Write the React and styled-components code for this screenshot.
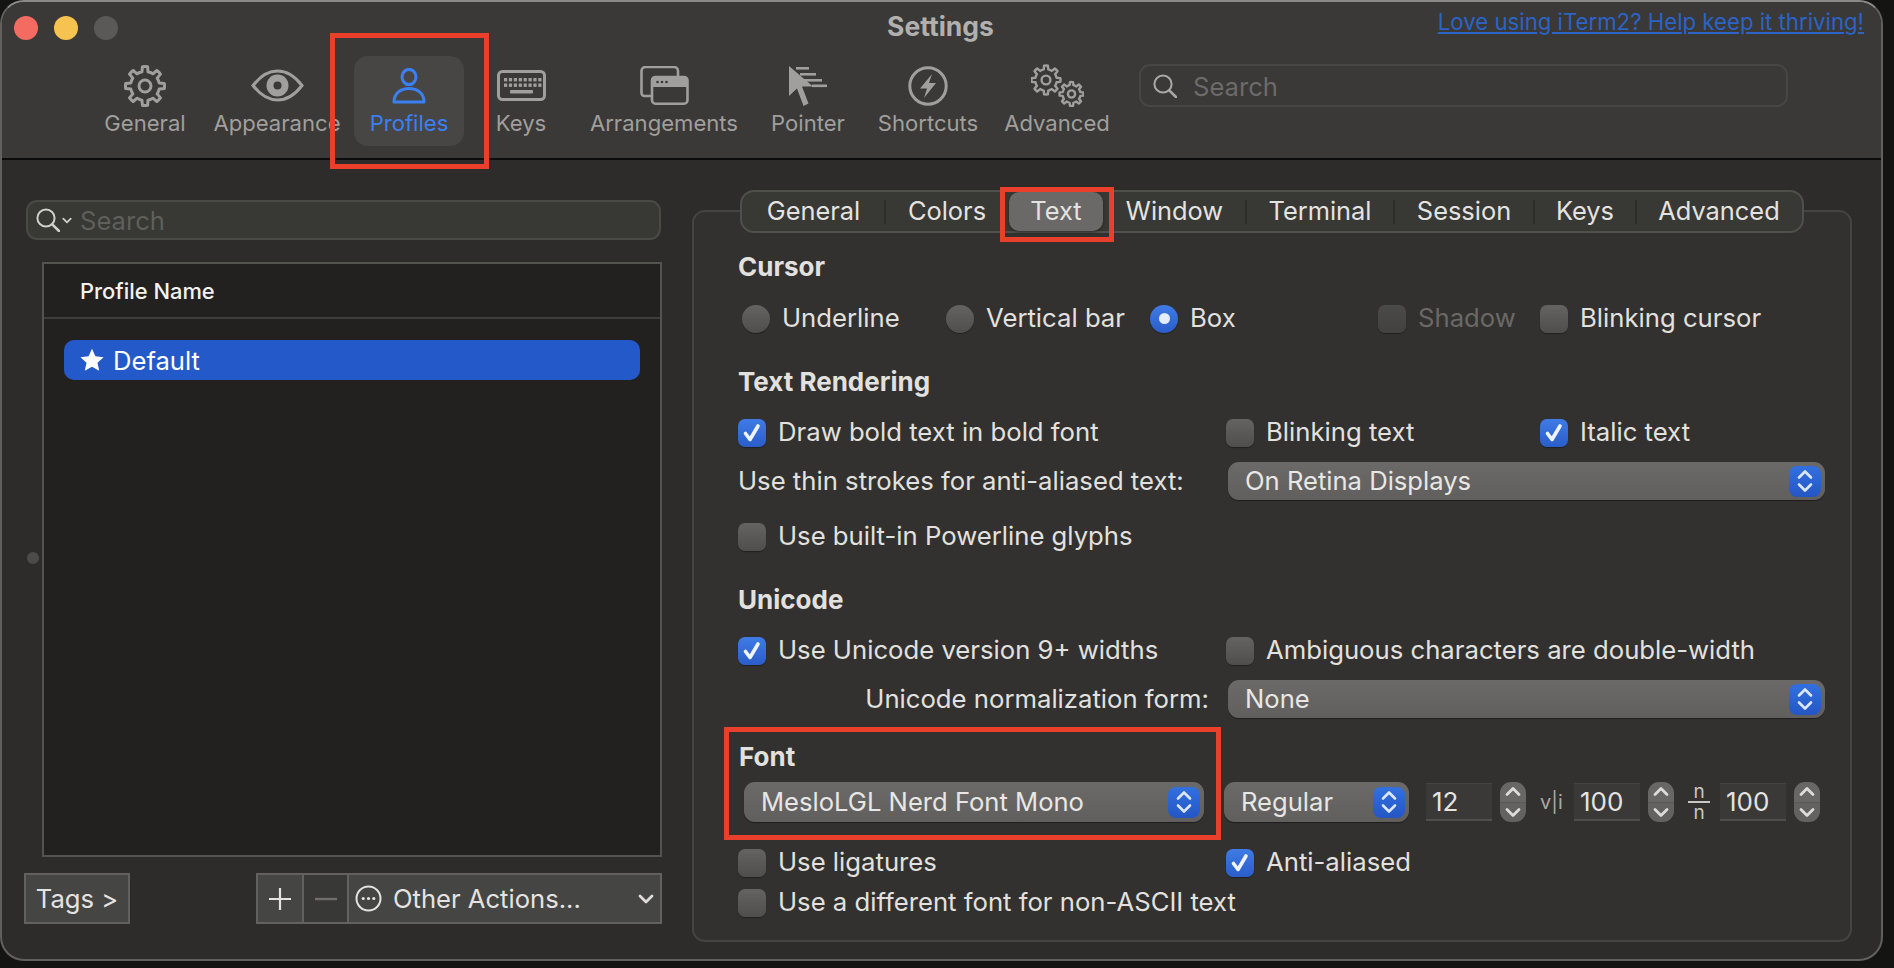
import React from 'react'
import styled, { createGlobalStyle } from 'styled-components'

const GlobalStyle = createGlobalStyle`
    * { box-sizing: border-box; }
    html, body { margin: 0; padding: 0; background: #141413; }
    body { font-family: Inter, "Liberation Sans", sans-serif; color: #e2e1df; overflow: hidden; }
`

const Page = styled.div`
    position: relative;
    width: 1894px;
    height: 968px;
`

const Window = styled.div`
    width: 1883px;
    height: 961px;
    border: 2px solid #61605e;
    border-top-color: #8b8a88;
    border-radius: 24px;
    overflow: hidden;
    background: #2d2c2a;
    display: flex;
    flex-direction: column;
`

const Toolbar = styled.div`
    height: 158px;
    background: #3a3937;
    border-bottom: 2px solid #0c0c0c;
    flex-shrink: 0;
`

const TitleRow = styled.div`
    height: 54px;
    display: grid;
    grid-template-columns: 1fr auto 1fr;
`

const Lights = styled.div`
    display: flex;
    gap: 16px;
    padding: 14px 0 0 12px;
`

const Light = styled.div`
    width: 24px;
    height: 24px;
    border-radius: 50%;
    background: ${props => props.$color};
`

const Title = styled.div`
    padding: 11px 2px 0 0;
    font-size: 26.5px;
    font-weight: 700;
    line-height: 26px;
    color: #b1b0ae;
`

const Promo = styled.a`
    justify-self: end;
    padding: 7px 17px 0 0;
    font-size: 22.2px;
    line-height: 26px;
    color: #2c63c6;
    text-decoration: underline;
    white-space: nowrap;
`

const ToolRow = styled.div`
    display: flex;
    padding-left: 88px;
    height: 90px;
`

const ToolItem = styled.div`
    width: ${props => props.$width}px;
    height: 90px;
    border-radius: 14px;
    display: flex;
    flex-direction: column;
    align-items: center;
    background: ${props => (props.$active ? '#474645' : 'transparent')};
    color: ${props => (props.$active ? '#3b80f2' : '#a09f9d')};
`

const ToolIcon = styled.div`
    height: 55px;
    padding-top: 4px;
    display: flex;
    align-items: center;
    justify-content: center;
`

const ToolLabel = styled.div`
    font-size: 22.1px;
    line-height: 24px;
    white-space: nowrap;
`

const ToolSearch = styled.div`
    width: 649px;
    height: 43px;
    margin: 8px 0 0 15px;
    border: 2px solid #474644;
    border-radius: 11px;
    display: flex;
    align-items: center;
    gap: 16px;
    padding: 1px 0 0 12px;
    font-size: 25.6px;
    color: #6c6b69;
`

const GlassSlot = styled.span`
    display: flex;
    color: ${props => props.$color};
`

const FilterChevron = styled.span`
    display: flex;
    margin: 0 8px 0 2px;
`

const Body = styled.div`
    flex: 1;
    display: flex;
`

const LeftPane = styled.div`
    position: relative;
    width: 690px;
    padding: 40px 0 0 22px;
`

const ProfileSearch = styled.div`
    width: 635px;
    height: 40px;
    margin-left: 2px;
    border: 2px solid #494945;
    border-radius: 11px;
    background: #383834;
    display: flex;
    align-items: center;
    padding-left: 8px;
    font-size: 25.6px;
    color: #5f5f5c;
`

const ProfileTable = styled.div`
    width: 620px;
    height: 595px;
    margin: 22px 0 0 18px;
    border: 2px solid #53534f;
    background: #22211f;
`

const TableHead = styled.div`
    height: 55px;
    padding-left: 36px;
    border-bottom: 2px solid #3e3d3b;
    display: flex;
    align-items: center;
    font-size: 21.9px;
    font-weight: 500;
    color: #f2f2f0;
`

const TableRow = styled.div`
    width: 576px;
    height: 40px;
    margin: 21px 0 0 20px;
    border-radius: 10px;
    background: #2459c9;
    display: flex;
    align-items: center;
    gap: 9px;
    padding-left: 16px;
    font-size: 25.6px;
    color: #fff;
`

const SplitHandle = styled.div`
    position: absolute;
    left: 25px;
    top: 392px;
    width: 12px;
    height: 12px;
    border-radius: 50%;
    background: #4c4b49;
`

const ListFooter = styled.div`
    display: flex;
    margin-top: 16px;
    height: 51px;
`

const FooterButton = styled.div`
    width: ${props => props.$width}px;
    height: 51px;
    margin-left: ${props => props.$gap || 0}px;
    border: 2px solid #62615f;
    border-left-width: ${props => (props.$joined ? 0 : 2)}px;
    background: ${props => (props.$dim ? '#383836' : '#454543')};
    display: flex;
    align-items: center;
    justify-content: ${props => (props.$spread ? 'flex-start' : 'center')};
    gap: 11px;
    padding-left: ${props => (props.$spread ? 6 : 0)}px;
    font-size: 25.6px;
    color: #e4e3e1;
`

const FooterChevron = styled.div`
    margin-left: auto;
    margin-right: 6px;
    display: flex;
`

const RightPane = styled.div`
    padding-top: 50px;
`

const Panel = styled.div`
    width: 1160px;
    height: 732px;
    border: 2px solid #454442;
    border-radius: 13px;
    background: #32312f;
`

const TabBar = styled.div`
    width: 1064px;
    height: 43px;
    margin: -22px 0 0 46px;
    border: 2px solid #4f4f4b;
    border-radius: 14px;
    background: #383834;
    display: flex;
    align-items: center;
`

const Tab = styled.div`
    position: relative;
    width: ${props => props.$width}px;
    height: 39px;
    padding-bottom: 2px;
    border-radius: 10px;
    display: flex;
    align-items: center;
    justify-content: center;
    font-size: 25.4px;
    color: #e4e3e1;
    background: ${props => (props.$selected ? '#6a6967' : 'transparent')};
    box-shadow: ${props => (props.$selected ? '0 1px 3px rgba(0,0,0,.45)' : 'none')};

    ${props => props.$sep && `
        &::after {
            content: '';
            position: absolute;
            right: -1px;
            top: 8px;
            height: 24px;
            width: 2px;
            background: #2d2c2a;
        }
    `}
`

const Content = styled.div`
    padding-left: 44px;
`

const Heading = styled.div`
    height: 30px;
    margin-top: ${props => props.$top}px;
    margin-left: ${props => props.$left || 0}px;
    font-size: 26px;
    font-weight: 700;
    line-height: 30px;
    color: #e2e1df;
`

const Row = styled.div`
    display: grid;
    grid-template-columns: ${props => props.$columns || '488px 314px 1fr'};
    align-items: center;
    height: ${props => props.$height || 28}px;
    margin-top: ${props => props.$top}px;
    margin-left: ${props => props.$left || 0}px;
`

const Option = styled.div`
    display: flex;
    align-items: center;
    gap: 12px;
    font-size: 25.7px;
    white-space: nowrap;
    color: ${props => (props.$disabled ? '#6a6967' : '#e2e1df')};
`

const RaisedText = styled.span`
    padding-bottom: 2px;
`

const Check = styled.div`
    width: 28px;
    height: 28px;
    border-radius: 7px;
    display: flex;
    align-items: center;
    justify-content: center;
    flex-shrink: 0;
    background: ${props => (props.$on
        ? 'linear-gradient(#3f7be6, #2a5dc9)'
        : props.$disabled
            ? 'linear-gradient(#4a4a48, #424140)'
            : 'linear-gradient(#646361, #4f4e4c)')};
    box-shadow: 0 1px 1px rgba(0,0,0,.35);
`

const Radio = styled(Check)`
    border-radius: 50%;
`

const RadioDot = styled.div`
    width: 11px;
    height: 11px;
    border-radius: 50%;
    background: #e4edfc;
`

const FieldLabel = styled.div`
    font-size: 25.7px;
    white-space: nowrap;
    text-align: ${props => (props.$right ? 'right' : 'left')};
    padding-right: ${props => (props.$right ? 17 : 0)}px;
    padding-bottom: 2px;
`

const Popup = styled.div`
    width: ${props => props.$width}px;
    height: ${props => props.$height || 38}px;
    margin-left: ${props => props.$left || 0}px;
    border-radius: 11px;
    background: linear-gradient(#6b6a68, #615f5d);
    box-shadow: 0 1px 1px rgba(0,0,0,.4);
    display: flex;
    align-items: center;
    justify-content: space-between;
    padding: 0 4px 0 17px;
    font-size: 25.6px;
    color: #e8e7e5;
    flex-shrink: 0;
`

const PopupArrows = styled.div`
    width: 32px;
    height: ${props => props.$height || 31}px;
    border-radius: 8px;
    background: linear-gradient(#3270e0, #2456c4);
    display: flex;
    align-items: center;
    justify-content: center;
`

const FontRow = styled.div`
    display: flex;
    align-items: center;
    height: 40px;
    margin: 10px 0 0 6px;
`

const NumberField = styled.div`
    width: 66px;
    height: 38px;
    margin-left: ${props => props.$left}px;
    background: #3a3937;
    border-top: 1px solid #454442;
    border-bottom: 2px solid #504f4d;
    display: flex;
    align-items: center;
    padding-left: 6px;
    font-size: 26px;
    color: #e4e3e1;
`

const Stepper = styled.div`
    width: 26px;
    height: 40px;
    margin-left: 8px;
    border-radius: 11px;
    background: linear-gradient(#686765 49%, #555452 50%, #636260 54%);
    display: flex;
    align-items: center;
    justify-content: center;
`

const SpacingLabel = styled.div`
    width: 23px;
    margin-left: 14px;
    font-size: 20px;
    color: #a9a8a6;
    white-space: nowrap;
`

const RatioLabel = styled.div`
    width: 22px;
    margin-left: 14px;
    display: flex;
    flex-direction: column;
    align-items: center;
    font-size: 19px;
    line-height: 17px;
    color: #c8c7c5;
`

const RatioLine = styled.div`
    width: 100%;
    height: 2px;
    margin: 1px 0;
    background: #c8c7c5;
`

const Callout = styled.div`
    position: absolute;
    left: ${props => props.$x}px;
    top: ${props => props.$y}px;
    width: ${props => props.$w}px;
    height: ${props => props.$h}px;
    border: 5px solid #e8402a;
    pointer-events: none;
`

// gear outline, used by the General and Advanced toolbar icons
const gearPath = (cx, cy, outer, inner, teeth = 8) => {
    const step = (Math.PI * 2) / teeth
    const w = step * 0.27
    const pt = (r, a) => `${(cx + r * Math.cos(a)).toFixed(2)} ${(cy + r * Math.sin(a)).toFixed(2)}`
    let d = ''
    for (let i = 0; i < teeth; i++) {
        const a = i * step - Math.PI / 2
        d += `${i === 0 ? 'M' : 'L'}${pt(inner, a - w)} L${pt(outer, a - w * 0.62)} A${outer} ${outer} 0 0 1 ${pt(outer, a + w * 0.62)} L${pt(inner, a + w)} `
        d += `A${inner} ${inner} 0 0 1 ${pt(inner, a + step - w)} `
    }
    return d + 'Z'
}

const GearIcon = () => (
    <svg width="42" height="42" viewBox="0 0 42 42" fill="none" stroke="currentColor" strokeWidth="3" strokeLinejoin="round">
        <path d={gearPath(21, 21, 19.5, 14.5)} />
        <circle cx="21" cy="21" r="6" />
    </svg>
)

const EyeIcon = () => (
    <svg width="53" height="33" viewBox="0 0 53 33" fill="none" stroke="currentColor" strokeWidth="3">
        <path d="M2 16.5C10 6 18 2 26.5 2S43 6 51 16.5C43 27 35 31 26.5 31S10 27 2 16.5Z" />
        <circle cx="26.5" cy="16.5" r="11" fill="currentColor" stroke="none" />
        <circle cx="26.5" cy="16.5" r="4" fill="#3a3937" stroke="none" />
    </svg>
)

const PersonIcon = () => (
    <svg width="34" height="36" viewBox="0 0 34 36" fill="none" stroke="currentColor" strokeWidth="3">
        <ellipse cx="17" cy="9" rx="7" ry="7.6" />
        <path d="M2 34C2 25 9 20.5 17 20.5S32 25 32 34Z" strokeLinejoin="round" />
    </svg>
)

const KeyboardIcon = () => {
    const keys = []
    for (let row = 0; row < 2; row++) {
        for (let col = 0; col < 8; col++) {
            keys.push(<rect key={`${row}-${col}`} x={7 + col * 4.9} y={8 + row * 5.5} width="3.2" height="3.4" />)
        }
    }
    return (
        <svg width="49" height="31" viewBox="0 0 49 31" fill="currentColor">
            <rect x="1.5" y="1.5" width="46" height="28" rx="4" fill="none" stroke="currentColor" strokeWidth="3" />
            {keys}
            <rect x="13" y="20" width="23" height="3.4" rx="1" />
        </svg>
    )
}

const WindowsIcon = () => (
    <svg width="49" height="39" viewBox="0 0 49 39" fill="none" stroke="currentColor" strokeWidth="2.6">
        <path d="M1.5 27V5a4 4 0 0 1 4-4H34a4 4 0 0 1 4 4v5" />
        <path d="M1.5 27a3 3 0 0 0 3 3H11" />
        <rect x="12" y="11" width="35.5" height="26.7" rx="3.5" />
        <path d="M12 14a3 3 0 0 1 3-3h29.5a3 3 0 0 1 3 3v7H12Z" fill="currentColor" stroke="none" />
        <circle cx="17.5" cy="16" r="1.3" fill="#3a3937" stroke="none" />
        <circle cx="22" cy="16" r="1.3" fill="#3a3937" stroke="none" />
        <circle cx="26.5" cy="16" r="1.3" fill="#3a3937" stroke="none" />
    </svg>
)

const PointerIcon = () => (
    <svg width="38" height="40" viewBox="0 0 38 40" fill="currentColor">
        <path d="M0 0V30L8 22.5L14.5 40L19.5 37.5L13 20.5H24Z" />
        <rect x="7" y="1" width="13" height="2.6" />
        <rect x="11" y="7" width="16" height="2.6" />
        <rect x="15" y="13" width="18" height="2.6" />
        <rect x="23" y="18.5" width="15" height="2.6" />
    </svg>
)

const BoltIcon = () => (
    <svg width="40" height="40" viewBox="0 0 40 40" fill="none" stroke="currentColor" strokeWidth="3">
        <circle cx="20" cy="20" r="18.2" />
        <path d="M24 8L12 22.5H19L16 32L28 17H21Z" fill="currentColor" stroke="none" />
    </svg>
)

const GearsIcon = () => (
    <svg width="53" height="43" viewBox="0 0 53 43" fill="none" stroke="currentColor" strokeWidth="2.4" strokeLinejoin="round">
        <path d={gearPath(15, 16, 14.5, 10.8)} />
        <circle cx="15" cy="16" r="4.4" />
        <path d={gearPath(40.5, 30, 12, 9)} />
        <circle cx="40.5" cy="30" r="3.6" />
    </svg>
)

const SearchGlass = ({ size = 24 }) => (
    <svg width={size} height={size} viewBox="0 0 24 24" fill="none" stroke="currentColor" strokeWidth="2" strokeLinecap="round">
        <circle cx="10" cy="10" r="8.6" />
        <path d="M16.2 16.4L23 23" strokeWidth="2.6" />
    </svg>
)

const SmallChevron = ({ color = '#dddcda', width = 16, height = 10 }) => (
    <svg width={width} height={height} viewBox="0 0 16 10" fill="none" stroke={color} strokeWidth="2.8" strokeLinecap="round" strokeLinejoin="round">
        <path d="M2 2L8 8L14 2" />
    </svg>
)

const StarIcon = () => (
    <svg width="24" height="24" viewBox="0 0 24 24" fill="#fff">
        <path d="M12 .8L15.4 8.3L23.6 9.2L17.5 14.7L19.2 22.8L12 18.7L4.8 22.8L6.5 14.7L.4 9.2L8.6 8.3Z" />
    </svg>
)

const EllipsisIcon = () => (
    <svg width="27" height="27" viewBox="0 0 27 27" fill="none" stroke="#e4e3e1" strokeWidth="2">
        <circle cx="13.5" cy="13.5" r="12" />
        <circle cx="8.2" cy="13.5" r="1.6" fill="#e4e3e1" stroke="none" />
        <circle cx="13.5" cy="13.5" r="1.6" fill="#e4e3e1" stroke="none" />
        <circle cx="18.8" cy="13.5" r="1.6" fill="#e4e3e1" stroke="none" />
    </svg>
)

const CheckMark = () => (
    <svg width="20" height="20" viewBox="0 0 20 20" fill="none" stroke="#eef3fd" strokeWidth="3.6" strokeLinecap="round" strokeLinejoin="round">
        <path d="M3.5 10.5L8 16.5L16 3" />
    </svg>
)

const UpDown = () => (
    <svg width="18" height="26" viewBox="0 0 18 26" fill="none" stroke="#dce6fa" strokeWidth="2.6" strokeLinecap="round" strokeLinejoin="round">
        <path d="M3 9.5L9 3.5L15 9.5" />
        <path d="M3 16.5L9 22.5L15 16.5" />
    </svg>
)

const StepArrows = () => (
    <svg width="16" height="34" viewBox="0 0 16 34" fill="none" stroke="#dddcda" strokeWidth="2.8" strokeLinecap="round" strokeLinejoin="round">
        <path d="M2 9.5L8 3.5L14 9.5" />
        <path d="M2 24.5L8 30.5L14 24.5" />
    </svg>
)

const CheckOption = ({ on, disabled, children }) => (
    <Option $disabled={disabled}>
        <Check $on={on} $disabled={disabled}>{on && <CheckMark />}</Check>
        <RaisedText>{children}</RaisedText>
    </Option>
)

const RadioOption = ({ on, children }) => (
    <Option>
        <Radio $on={on}>{on && <RadioDot />}</Radio>
        <RaisedText>{children}</RaisedText>
    </Option>
)

const PopupButton = ({ width, height, left, children }) => (
    <Popup $width={width} $height={height} $left={left}>
        <RaisedText>{children}</RaisedText>
        <PopupArrows><UpDown /></PopupArrows>
    </Popup>
)

const toolItems = [
    { label: 'General', width: 110, icon: <GearIcon /> },
    { label: 'Appearance', width: 154, icon: <EyeIcon /> },
    { label: 'Profiles', width: 110, icon: <PersonIcon />, active: true },
    { label: 'Keys', width: 114, icon: <KeyboardIcon /> },
    { label: 'Arrangements', width: 172, icon: <WindowsIcon /> },
    { label: 'Pointer', width: 116, icon: <PointerIcon /> },
    { label: 'Shortcuts', width: 124, icon: <BoltIcon /> },
    { label: 'Advanced', width: 134, icon: <GearsIcon /> },
]

const tabs = [
    { label: 'General', width: 143, sep: true },
    { label: 'Colors', width: 124 },
    { label: 'Text', width: 94, selected: true },
    { label: 'Window', width: 143, sep: true },
    { label: 'Terminal', width: 148, sep: true },
    { label: 'Session', width: 140, sep: true },
    { label: 'Keys', width: 102, sep: true },
    { label: 'Advanced', width: 166 },
]

const App = () => {
    return (
        <Page>
            <GlobalStyle />
            <Window>
                <Toolbar>
                    <TitleRow>
                        <Lights>
                            <Light $color="#f46b62" />
                            <Light $color="#f6c350" />
                            <Light $color="#5a5957" />
                        </Lights>
                        <Title>Settings</Title>
                        <Promo>Love using iTerm2? Help keep it thriving!</Promo>
                    </TitleRow>
                    <ToolRow>
                        {toolItems.map(item => (
                            <ToolItem key={item.label} $width={item.width} $active={item.active}>
                                <ToolIcon>{item.icon}</ToolIcon>
                                <ToolLabel>{item.label}</ToolLabel>
                            </ToolItem>
                        ))}
                        <ToolSearch>
                            <GlassSlot $color="#aaa9a7"><SearchGlass /></GlassSlot>
                            Search
                        </ToolSearch>
                    </ToolRow>
                </Toolbar>

                <Body>
                    <LeftPane>
                        <ProfileSearch>
                            <GlassSlot $color="#d0cfcd"><SearchGlass /></GlassSlot>
                            <FilterChevron><SmallChevron width={10} height={7} color="#d0cfcd" /></FilterChevron>
                            Search
                        </ProfileSearch>
                        <ProfileTable>
                            <TableHead>Profile Name</TableHead>
                            <TableRow><StarIcon />Default</TableRow>
                        </ProfileTable>
                        <SplitHandle />
                        <ListFooter>
                            <FooterButton $width={106}>Tags &gt;</FooterButton>
                            <FooterButton $width={48} $gap={126}>
                                <svg width="22" height="24" viewBox="0 0 22 24" stroke="#e4e3e1" strokeWidth="2.2"><path d="M11 1V23M0 12H22" /></svg>
                            </FooterButton>
                            <FooterButton $width={45} $joined $dim>
                                <svg width="22" height="4" viewBox="0 0 22 4" stroke="#6f6e6c" strokeWidth="2.4"><path d="M0 2H22" /></svg>
                            </FooterButton>
                            <FooterButton $width={313} $joined $spread>
                                <EllipsisIcon />
                                Other Actions...
                                <FooterChevron><SmallChevron /></FooterChevron>
                            </FooterButton>
                        </ListFooter>
                    </LeftPane>

                    <RightPane>
                        <Panel>
                            <TabBar>
                                {tabs.map(tab => (
                                    <Tab key={tab.label} $width={tab.width} $sep={tab.sep} $selected={tab.selected}>{tab.label}</Tab>
                                ))}
                            </TabBar>
                            <Content>
                                <Heading $top={19}>Cursor</Heading>
                                <Row $top={20} $left={4} $columns="204px 204px 228px 162px 1fr">
                                    <RadioOption>Underline</RadioOption>
                                    <RadioOption>Vertical bar</RadioOption>
                                    <RadioOption on>Box</RadioOption>
                                    <CheckOption disabled>Shadow</CheckOption>
                                    <CheckOption>Blinking cursor</CheckOption>
                                </Row>

                                <Heading $top={37}>Text Rendering</Heading>
                                <Row $top={19}>
                                    <CheckOption on>Draw bold text in bold font</CheckOption>
                                    <CheckOption>Blinking text</CheckOption>
                                    <CheckOption on>Italic text</CheckOption>
                                </Row>
                                <Row $top={18} $height={38} $columns="488px 1fr">
                                    <FieldLabel>Use thin strokes for anti-aliased text:</FieldLabel>
                                    <PopupButton width={597} left={2}>On Retina Displays</PopupButton>
                                </Row>
                                <Row $top={20}>
                                    <CheckOption>Use built-in Powerline glyphs</CheckOption>
                                </Row>

                                <Heading $top={37}>Unicode</Heading>
                                <Row $top={19}>
                                    <CheckOption on>Use Unicode version 9+ widths</CheckOption>
                                    <CheckOption>Ambiguous characters are double-width</CheckOption>
                                </Row>
                                <Row $top={18} $height={38} $columns="488px 1fr">
                                    <FieldLabel $right>Unicode normalization form:</FieldLabel>
                                    <PopupButton width={597} left={2}>None</PopupButton>
                                </Row>

                                <Heading $top={24} $left={1}>Font</Heading>
                                <FontRow>
                                    <PopupButton width={460} height={40}>MesloLGL Nerd Font Mono</PopupButton>
                                    <PopupButton width={185} height={40} left={20}>Regular</PopupButton>
                                    <NumberField $left={17}>12</NumberField>
                                    <Stepper><StepArrows /></Stepper>
                                    <SpacingLabel>v|i</SpacingLabel>
                                    <NumberField $left={11}>100</NumberField>
                                    <Stepper><StepArrows /></Stepper>
                                    <RatioLabel>n<RatioLine />n</RatioLabel>
                                    <NumberField $left={10}>100</NumberField>
                                    <Stepper><StepArrows /></Stepper>
                                </FontRow>
                                <Row $top={24}>
                                    <CheckOption>Use ligatures</CheckOption>
                                    <CheckOption on>Anti-aliased</CheckOption>
                                </Row>
                                <Row $top={12}>
                                    <CheckOption>Use a different font for non-ASCII text</CheckOption>
                                </Row>
                            </Content>
                        </Panel>
                    </RightPane>
                </Body>
            </Window>

            <Callout $x={330} $y={33} $w={159} $h={136} />
            <Callout $x={1000} $y={187} $w={114} $h={55} />
            <Callout $x={724} $y={727} $w={497} $h={113} />
        </Page>
    )
}

export default App
